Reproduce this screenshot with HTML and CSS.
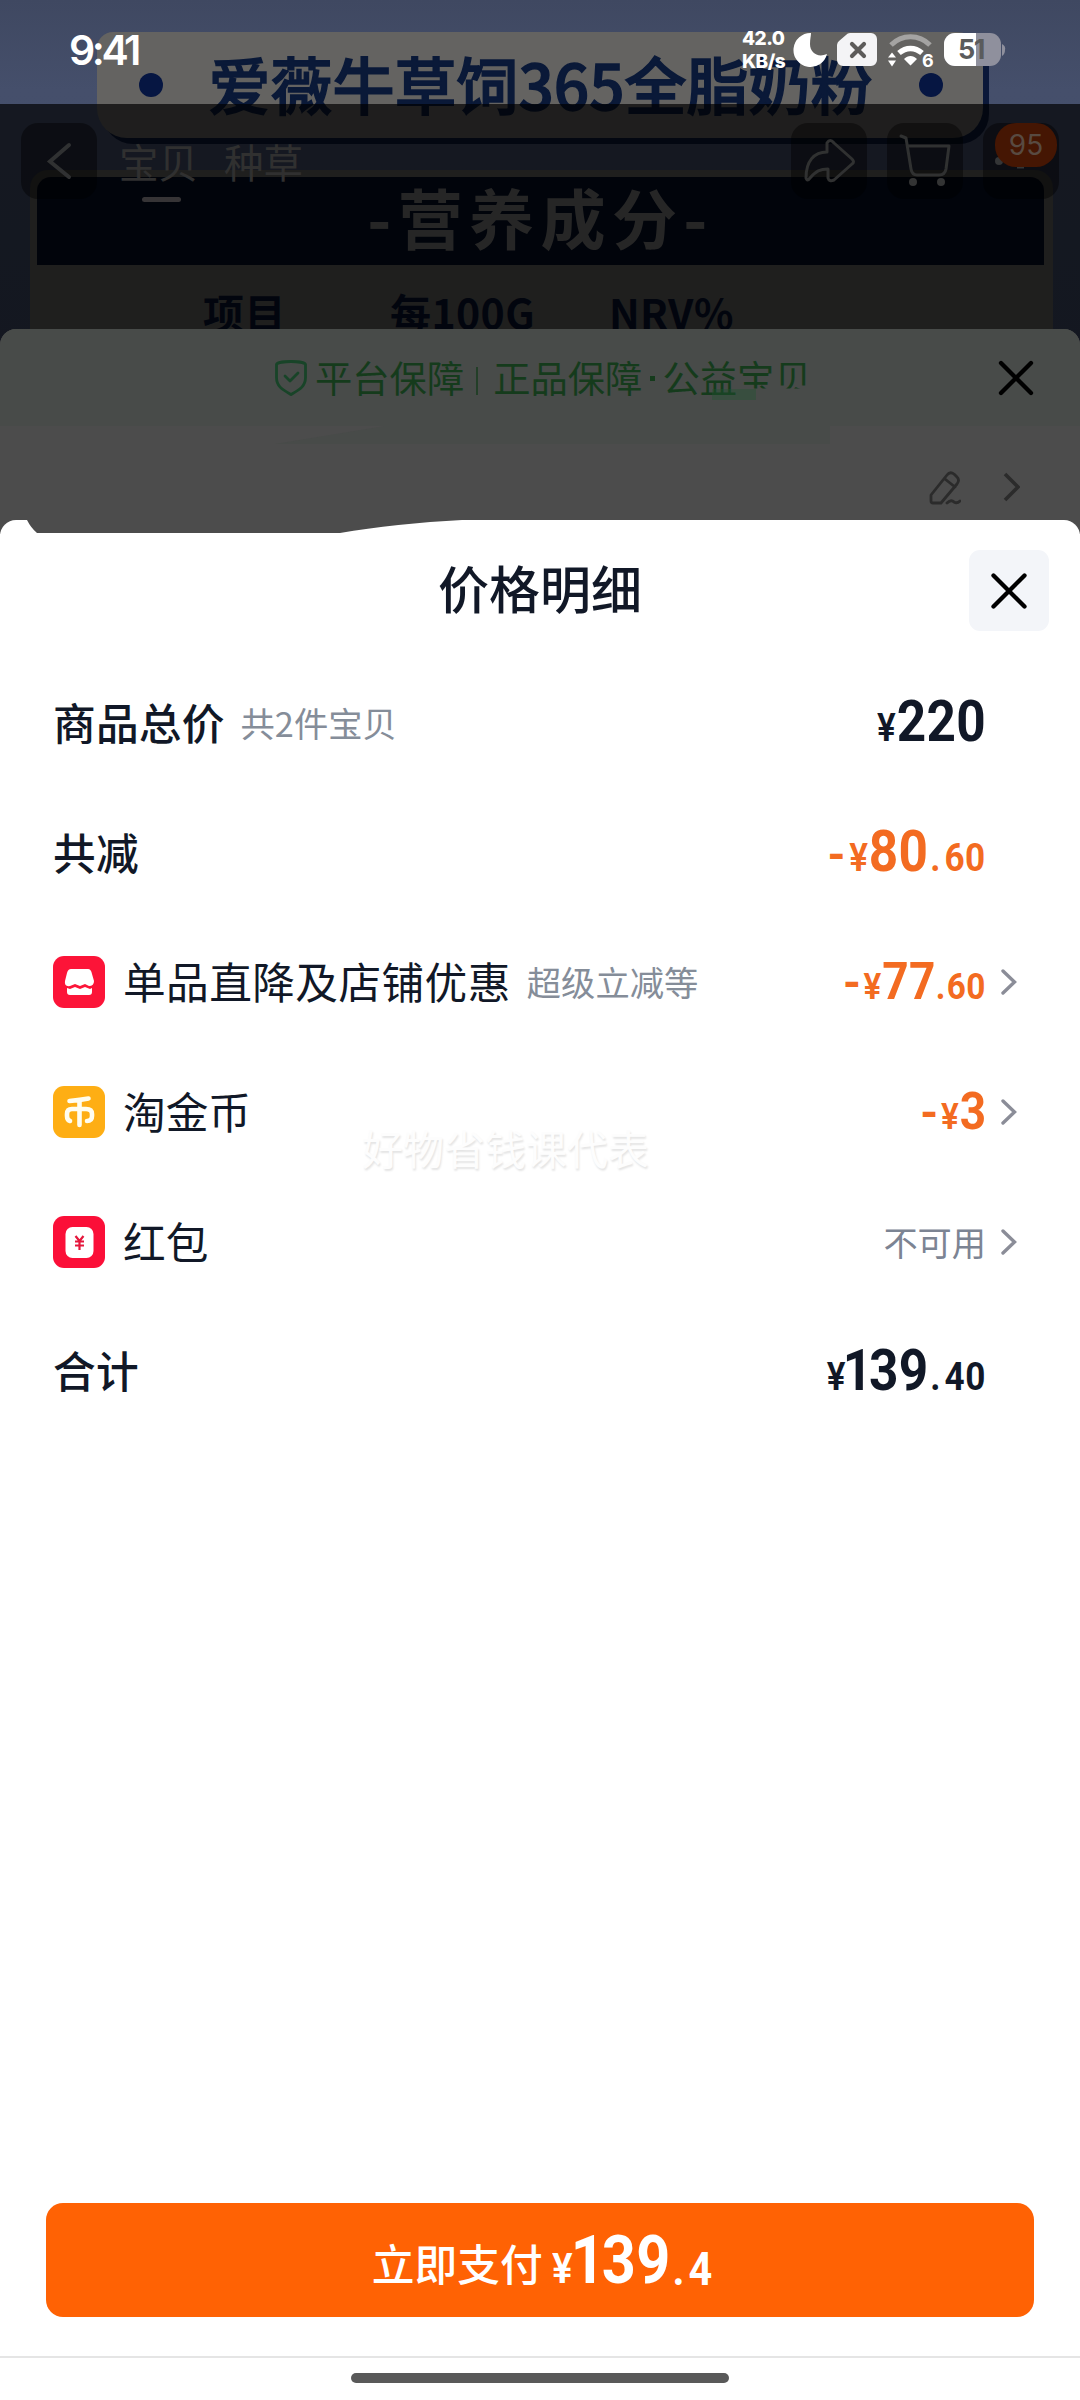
FILE: index.html
```html
<!DOCTYPE html>
<html lang="zh-CN">
<head>
<meta charset="utf-8">
<title>价格明细</title>
<link rel="stylesheet" href="styles.css">
</head>
<body>
<div class="screen">

  <section class="poster">
    <div class="banner"><i class="dot"></i><span>爱薇牛草饲365全脂奶粉</span><i class="dot"></i></div>
    <div class="nutrition">
      <h2 class="nutrition-title">-营养成分-</h2>
      <div class="nutrition-head"><span>项目</span><span>每100G</span><span>NRV%</span></div>
    </div>
  </section>

  <div class="page">
    <header class="status">
      <span class="clock">9:41</span>
      <span class="rate">42.0<br>KB/s</span>
      <svg class="status-icons" width="218" height="36" viewBox="790 32 218 36">
        <path d="M811 33a17 17 0 1 0 16 21c-9 4-17-1-17-10 0-5 1-8 1-11Z" fill="#fff"/>
        <path d="M850 33h21a6 6 0 0 1 6 6v21a6 6 0 0 1-6 6h-28a6 6 0 0 1-6-6V45a6 6 0 0 1 2-4l7-6a6 6 0 0 1 4-2Z" fill="#f4f4f6"/>
        <path d="m852 44 12 12m0-12-12 12" stroke="#5c5b5a" stroke-width="4.200" stroke-linecap="round"/>
        <path d="M891 45c11-11 28-11 39 0" fill="none" stroke="#a4a3a2" stroke-width="5"/>
        <path d="M899 53c7-6 16-6 23 0" fill="none" stroke="#fff" stroke-width="5.500"/>
        <path d="M904 59c4-4 9-4 13 0l-6.500 6.500ZM888 57.500l4-5 4 5Zm0 3h8l-4 6Z" fill="#fff"/>
        <rect x="944" y="33" width="57" height="33" rx="11" fill="#8f909d"/>
        <path d="M1002 44q4 2 3 6 0 4-3 6Z" fill="#8f909d"/>
        <path d="M955 33h21v33h-21a11 11 0 0 1-11-11V44a11 11 0 0 1 11-11Z" fill="#fff"/>
        <text x="922" y="67" class="wifi-gen">6</text>
        <text x="958" y="59" class="battery-level">51</text>
      </svg>
    </header>
    <div class="shade">
      <nav class="topbar">
        <span class="round"><svg width="76" height="76"><path d="M48 22 29 38.500 48 54" fill="none" stroke="#303132" stroke-width="4" stroke-linecap="round"/></svg></span>
        <span class="tab active">宝贝</span><span class="tab">种草</span>
        <span class="round push"><svg width="76" height="76"><path d="M15 55c0-17 8-26 21-26v-9q3-5 7 0l18 16q3 3 0 5L43 57q-5 2-6-2v-9c-8 0-12 2-18 9q-3 4-4 0Z" fill="none" stroke="#303131" stroke-width="3" stroke-linejoin="round"/></svg></span>
        <span class="round"><svg width="76" height="76"><path d="m14 13 5 2 5 31q1 6 6 6h22q6 0 7-6l3-23H21" fill="none" stroke="#303131" stroke-width="3" stroke-linecap="round" stroke-linejoin="round"/><circle cx="26" cy="59" r="4" fill="#333434"/><circle cx="54" cy="59" r="4" fill="#333434"/></svg></span>
        <span class="round message"><svg width="76" height="76"><circle cx="16" cy="38" r="4" fill="#343536"/><path d="M34 44.500h7" stroke="#343536" stroke-width="2"/></svg><b class="badge">95</b></span>
      </nav>
      <section class="order">
        <div class="guarantee">
          <svg class="shield" width="32" height="36" viewBox="0 0 32 36" fill="none" stroke="#184428" stroke-width="2.800" stroke-linejoin="round"><path d="M16 1.500c6 0 14 1 14.500 3v13c0 9-6 12-14.500 17-8.500-5-14.500-8-14.500-17v-13c.5-2 8.500-3 14.500-3Z"/><path d="m10 16 5 5 8-8" stroke-linecap="round"/></svg>
          <span>平台保障</span><i class="bar"></i><span>正品保障</span><i class="point"></i><span>公益<u class="cut">宝贝</u></span>
          <i class="smear"></i>
          <svg class="order-close" width="36" height="36" viewBox="0 0 36 36"><path d="m3 3 30 30M33 3 3 33" stroke="#000" stroke-width="4.300" stroke-linecap="round"/></svg>
        </div>
        <svg class="band" width="555" height="18"><path d="M0 18 110 0h445v18Z" fill="#484b49"/></svg>
        <div class="address">
          <svg width="32" height="34" viewBox="0 0 32 34" fill="none" stroke="#2b2b2b" stroke-width="2.800" stroke-linejoin="round" stroke-linecap="round"><path d="M2 24 18 4q3-4 7-1l3 3q3 3 0 7L12 32H4q-2 0-2-2ZM16 8l10 8M18 32q4-4 7-1 3 2 6-1"/></svg>
          <svg width="17" height="30" viewBox="0 0 17 30"><path d="m2 2 13 13L2 28" fill="none" stroke="#2b2b2b" stroke-width="3.600"/></svg>
        </div>
      </section>
    </div>
  </div>

  <main class="sheet">
    <svg class="notch" width="470" height="14"><path d="M27 0q4 8 10 13h303c35-6 80-11 122-13Z" fill="#4c4c4c"/></svg>
    <header class="sheet-head">
      <h1>价格明细</h1>
      <button class="close"><svg width="36" height="36" viewBox="0 0 36 36"><path d="m2.500 2.500 31 31M33.500 2.500l-31 31" stroke="#000" stroke-width="4.300" stroke-linecap="round"/></svg></button>
    </header>

    <ul class="rows">
      <li><b>商品总价</b><small>共2件宝贝</small>
        <span class="price"><i class="yen">¥</i><i class="int">220</i></span></li>
      <li><b>共减</b>
        <span class="price off"><i class="minus">-</i><i class="yen">¥</i><i class="int">80</i><i class="dec"><s>.</s>60</i></span></li>
      <li class="link">
        <svg class="tile" width="52" height="52"><rect width="52" height="52" rx="11" fill="#fc1438"/><path d="M18 13h17q3 0 4 5l2 7q0 5-5 5l-4-2-5 2-5-2-5 2q-6 1-5-5l2-8q1-4 4-4Z" fill="#fff"/><path d="m14 32 3 1 5-2 5 2 5-2 5 2 2-1v4q0 3-3 3H17q-3 0-3-3Z" fill="#fff"/></svg>
        <span class="name wide">单品直降及店铺优惠</span><small>超级立减等</small>
        <span class="price off mid"><i class="minus">-</i><i class="yen">¥</i><i class="int">77</i><i class="dec"><s>.</s>60</i></span>
        <svg class="chev" width="16" height="26"><path d="m2 2 11.500 11L2 24" fill="none" stroke="#8b8d98" stroke-width="3.400" stroke-linecap="round"/></svg></li>
      <li class="link">
        <svg class="tile" width="52" height="52"><rect width="52" height="52" rx="11" fill="#feae14"/><g fill="none" stroke="#fffdf0" stroke-width="4.600" stroke-linecap="round" stroke-linejoin="round"><path d="M16.500 15q11-1 19-2.500M26.500 14v25M17 35q-3-1-3-5v-2q0-5 5-5h14q6 0 6 5v2q0 5-5 5"/></g></svg>
        <span class="name">淘金币</span>
        <span class="price off mid"><i class="minus">-</i><i class="yen">¥</i><i class="int">3</i></span>
        <svg class="chev" width="16" height="26"><path d="m2 2 11.500 11L2 24" fill="none" stroke="#8b8d98" stroke-width="3.400" stroke-linecap="round"/></svg></li>
      <li class="link">
        <svg class="tile" width="52" height="52"><rect width="52" height="52" rx="11" fill="#fb0f38"/><rect x="12.500" y="11" width="28" height="31" rx="7" fill="#fff"/><path d="m22.500 20 4 5 4-5M26.500 25v9M22 25.500h9M22 29.500h9" fill="none" stroke="#e5173c" stroke-width="2.200"/></svg>
        <span class="name">红包</span>
        <span class="none">不可用</span>
        <svg class="chev" width="16" height="26"><path d="m2 2 11.500 11L2 24" fill="none" stroke="#8b8d98" stroke-width="3.400" stroke-linecap="round"/></svg></li>
      <li><b>合计</b>
        <span class="price"><i class="yen">¥</i><i class="int"><s class="one">1</s>39</i><i class="dec"><s>.</s>40</i></span></li>
    </ul>
    <span class="watermark">好物省钱课代表</span>

    <footer class="foot">
      <button class="pay"><span>立即支付</span><span class="pay-price"><i class="yen">¥</i><i class="int"><s class="one">1</s>39</i><i class="dec"><s>.</s>4</i></span></button>
      <div class="home"><i></i></div>
    </footer>
  </main>
</div>
</body>
</html>
```
FILE: styles.css
```css
* { box-sizing: border-box; margin: 0; padding: 0; }
i, em, s, u { font-style: normal; text-decoration: none; }
svg { display: block; flex: none; }
button { border: 0; font: inherit; }
body { font-family: "Noto Sans CJK SC", sans-serif; background: #fff; }

.screen { width: 1080px; height: 2400px; display: grid; overflow: hidden; position: relative; }
.screen > * { grid-area: 1 / 1; min-width: 0; }

/* product poster */
.poster { height: 520px; padding: 32px 27px 0 30px; background: linear-gradient(#3f4861, #454f6b 90px, #3f4a68); overflow: hidden; }
.banner {
  width: 886px; height: 106px; margin-left: 67px; padding: 0 40px 0 42px;
  display: flex; align-items: center; justify-content: space-between;
  background: #646361; border-radius: 16px 26px 30px 30px; box-shadow: 6px 6px 0 #0b1839;
  color: #0a1938; font-size: 62px; font-weight: 700; line-height: 96px; white-space: nowrap;
}
.banner span { font-weight: 500; -webkit-text-stroke: 1.500px #0a1938; margin: -5px 0 0 -1px; }
.dot { width: 24px; height: 24px; border-radius: 50%; background: #061642; }
.nutrition { margin-top: 32px; height: 400px; padding: 7px 9px 0 7px; background: #646462; border-radius: 18px 18px 0 0; }
.nutrition-title {
  height: 88px; line-height: 79px; background: #040e26; border-radius: 14px 14px 0 0;
  color: #7c7c7a; font-size: 65px; font-weight: 700; letter-spacing: 6.400px; text-align: center; white-space: nowrap;
}
.nutrition-head { display: grid; grid-template-columns: 187px 219px 1fr; padding: 20px 0 0 166px; color: #07122f; font-size: 41px; line-height: 52px; font-weight: 700; }
.nutrition-head span { letter-spacing: .4px; }

/* page chrome */
.page { height: 534px; display: flex; flex-direction: column; }
.status { height: 104px; display: flex; padding: 32px 72px 0 69px; color: #fff; }
.clock { width: 673px; font: 600 41px/36px Inter, sans-serif; letter-spacing: -3.400px; }
.rate { width: 48px; font: 800 19px/23px Inter, sans-serif; letter-spacing: -.5px; white-space: nowrap; margin-top: -5px; }
.wifi-gen { font: 700 18px Inter, sans-serif; fill: #fff; }
.battery-level { font: 700 27px Inter, sans-serif; fill: #5a5b5c; letter-spacing: -1.500px; }
.shade { flex: 1; background: rgba(0, 0, 0, .69); padding-top: 19px; }
.topbar { height: 206px; display: flex; align-items: flex-start; padding: 0 21px; }
.round { width: 76px; height: 76px; border-radius: 17px; background: rgba(0, 0, 0, .42); position: relative; margin-right: 20px; }
.message { margin-right: 0; }
.push { margin-left: auto; }
.badge { position: absolute; left: 12px; top: 0; width: 62px; height: 44px; border-radius: 21px; background: #451603; color: #584a41; font: 400 28px/44px Inter, sans-serif; text-align: center; }
.tab { width: 79px; margin: 15px 24px 0 2px; font-size: 39.500px; line-height: 46px; color: #303030; position: relative; white-space: nowrap; }
.tab.active::after { content: ""; position: absolute; left: 23px; top: 59px; width: 39px; height: 5px; border-radius: 3px; background: #363436; }

.order { height: 205px; border-radius: 16px 16px 0 0; background: #4c4c4c; position: relative; overflow: hidden; }
.guarantee { height: 97px; padding: 0 46px 0 275px; display: flex; align-items: center; background: #484b49; color: #153b1c; font-size: 37.300px; line-height: 50px; white-space: nowrap; }
.guarantee span { margin-top: -2px; }
.shield { margin-right: 8px; }
.bar { width: 2px; height: 28px; background: #233f28; margin: 6px 15px 0 12px; }
.point { width: 5px; height: 5px; background: #153b1c; margin: 1px 7px 0 8px; }
.cut { display: inline-block; vertical-align: top; clip-path: inset(0 0 13px 0); }
.smear { position: absolute; left: 712px; top: 60px; width: 44px; height: 11px; background: rgba(32, 82, 50, .4); }
.order-close { margin-left: auto; }
.band { margin-left: 275px; }
.address { height: 88px; display: flex; justify-content: flex-end; gap: 42px; padding: 27px 60px 0; }
.address svg:last-child { margin-top: 1px; }

/* price detail sheet */
.sheet { margin-top: 520px; background: #fff; border-radius: 16px 16px 0 0; position: relative; display: flex; flex-direction: column; color: #111827; }
.notch { position: absolute; left: 0; top: 0; }
.sheet-head { height: 138px; display: grid; place-items: center; padding-top: 3px; }
.sheet-head > * { grid-area: 1 / 1; }
.sheet-head h1 { font-size: 51px; line-height: 70px; font-weight: 500; margin-top: -7px; }
.close { justify-self: end; margin-right: 31px; width: 80px; height: 81px; border-radius: 11px; background: #f3f5f9; display: grid; place-items: center; }

.rows { list-style: none; padding: 0 94px 0 53px; }
.rows li { height: 129.700px; display: flex; align-items: center; font-size: 42.700px; line-height: 60px; white-space: nowrap; }
.rows .link { margin-right: -31px; }
.rows b { font-weight: 500; margin-top: -4px; letter-spacing: .2px; }
.rows small { font-size: 34.300px; color: #858d99; margin: -2px 0 0 16px; }
.tile { margin-right: 18px; }
.name { font-weight: 400; margin-top: -4px; }
.wide { letter-spacing: .4px; }
.chev { margin-left: 15px; }
.none { margin: -2px 0 0 auto; font-size: 34.200px; color: #7c8493; }

.price { margin: 5px 0 0 auto; display: flex; align-items: baseline; transform: scaleX(.9); transform-origin: right; font: 700 57px/60px Roboto, sans-serif; }
.price i, .pay-price i { display: block; }
.price.off { color: #f36b21; }
.yen { font-size: 39px; font-weight: 600; margin-right: 1px; }
.int { letter-spacing: .4px; }
.one { margin: 0 -4px 0 -4px; }
.dec { font-size: 39px; letter-spacing: .5px; }
.dec s { margin: 0 4px 0 2px; }
.minus { width: 17px; font-size: 46px; line-height: 1; margin-right: 7px; transform: scaleX(1.100); transform-origin: left; }
.mid { font-size: 51px; margin-top: 5px; }
.mid .yen, .mid .dec { font-size: 37px; }
.mid .minus { margin-right: 6px; }
.mid .dec s { margin: 0 1px 0 0; }

.watermark { position: absolute; left: 362px; top: 597px; font-size: 41px; line-height: 60px; color: #fdfdfd; text-shadow: 1px 2px 2px #e4e4e4; }

/* payment footer */
.foot { margin-top: auto; }
.pay { display: flex; justify-content: center; align-items: baseline; width: 988px; height: 114px; margin: 0 46px 39px; padding-top: 21px; border-radius: 17px; background: #ff6204; color: #fff; font-size: 42.700px; line-height: 70px; font-weight: 500; }
.pay-price { display: flex; align-items: baseline; position: relative; top: 2px; transform: scaleX(.9); transform-origin: left; margin: 0 -22px 0 9px; font: 700 66px/70px Roboto, sans-serif; }
.pay-price .yen { font-size: 43px; margin-right: 2px; }
.pay-price .dec { font-size: 46px; transform: translateY(2px); }
.home { height: 44px; border-top: 2px solid #e5e5e5; padding-top: 15px; }
.home i { display: block; width: 378px; height: 10px; margin: 0 auto; border-radius: 5px; background: #595959; }
```
